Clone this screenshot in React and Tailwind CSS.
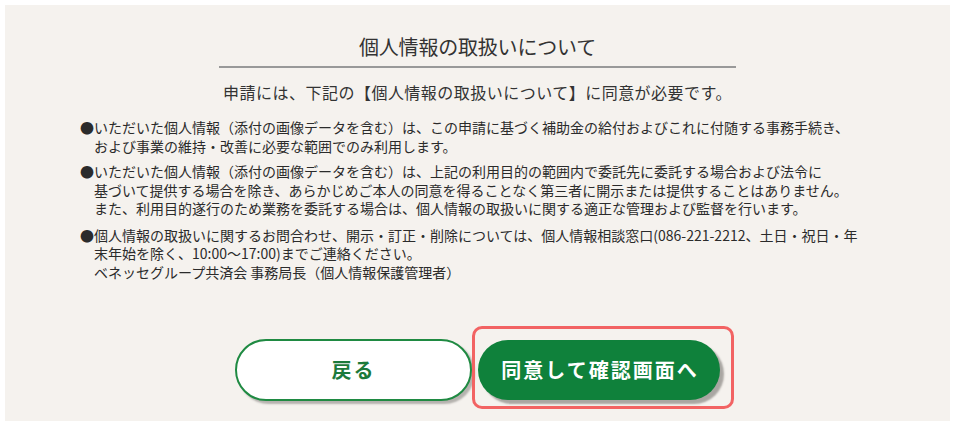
import React from 'react';

const items = [
  [
    '●いただいた個人情報（添付の画像データを含む）は、この申請に基づく補助金の給付およびこれに付随する事務手続き、',
    'および事業の維持・改善に必要な範囲でのみ利用します。',
  ],
  [
    '●いただいた個人情報（添付の画像データを含む）は、上記の利用目的の範囲内で委託先に委託する場合および法令に',
    '基づいて提供する場合を除き、あらかじめご本人の同意を得ることなく第三者に開示または提供することはありません。',
    'また、利用目的遂行のため業務を委託する場合は、個人情報の取扱いに関する適正な管理および監督を行います。',
  ],
  [
    '●個人情報の取扱いに関するお問合わせ、開示・訂正・削除については、個人情報相談窓口(086-221-2212、土日・祝日・年',
    '末年始を除く、10:00〜17:00)までご連絡ください。',
    'ベネッセグループ共済会 事務局長（個人情報保護管理者）',
  ],
];

export default function App() {
  return (
    <div
      className="bg-white w-[960px] h-[427px] pt-[5px] pl-[5px]"
      style={{ fontFamily: '"Noto Sans CJK JP", "Noto Sans", sans-serif' }}
    >
      <div className="w-[945px] h-[416px] bg-[#f5f2ee] flex flex-col items-center pt-[29px] text-[#333]">
        {/* Heading */}
        <h2 className="text-[20px] leading-[26px] tracking-[-0.01em]">個人情報の取扱いについて</h2>
        <div className="w-[517px] h-[2px] bg-[#999] mt-[6px]" />
        <p className="text-[16px] leading-[22px] mt-[13px] tracking-[0.03em]">
          申請には、下記の【個人情報の取扱いについて】に同意が必要です。
        </p>

        {/* Notes */}
        <div className="self-start ml-[75px] mt-[15px] text-[14px] leading-[18.5px] text-[#2b2b2b]">
          {items.map((lines, i) => (
            <div key={i} className={i === 0 ? '' : i === 1 ? 'mt-[7px]' : 'mt-[8px]'}>
              {lines.map((line, j) => (
                <p key={j} className={j === 0 ? '' : 'pl-[14px]'}>
                  {line}
                </p>
              ))}
            </div>
          ))}
        </div>

        {/* Buttons */}
        <div className="flex items-center gap-[6px] mt-[58px]">
          <button className="w-[237px] h-[62px] rounded-full bg-white border-2 border-[#1f8a42] shadow-[3px_3px_2px_#b5b2ae] text-[20px] font-bold text-[#1c7a3b] tracking-[0.1em]">
            戻る
          </button>
          <div className="relative">
            <button className="w-[242px] h-[60px] rounded-full bg-[#0f813b] shadow-[4px_4px_2px_#a9a6a2] text-[20px] font-bold text-white tracking-[0.1em] pl-[2px]">
              同意して確認画面へ
            </button>
            <div className="absolute left-[-6px] top-[-14px] right-[-14px] bottom-[-9px] border-[3px] border-[#f26363] rounded-[10px] pointer-events-none" />
          </div>
        </div>
      </div>
    </div>
  );
}
